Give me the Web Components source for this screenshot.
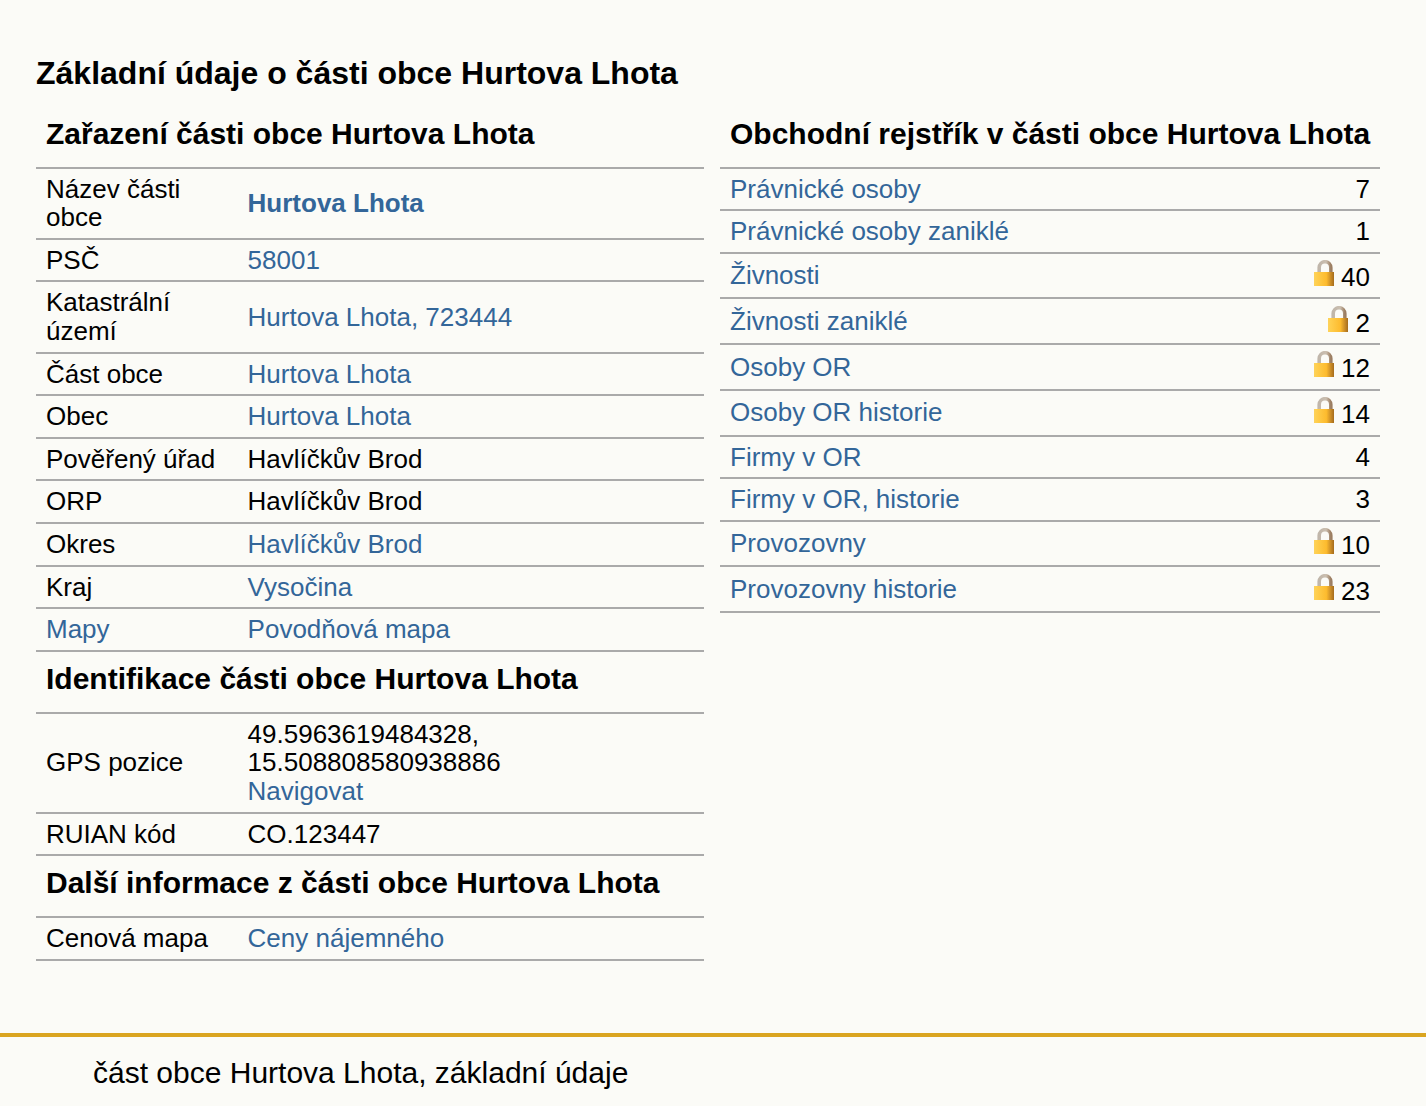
<!DOCTYPE html>
<html lang="cs"><head><meta charset="utf-8"><title>Hurtova Lhota</title>
<style>
html,body{margin:0;padding:0;background:#fbfbf7;color:#000;font-family:"Liberation Sans",Arial,sans-serif;}
</style></head><body>
<x-page>
  <x-columns>
    <x-panel slot="left">
      <x-head>Zařazení části obce Hurtova Lhota</x-head>
      <x-row><span slot="k">Název části obce</span><x-link strong>Hurtova Lhota</x-link></x-row>
      <x-row><span slot="k">PSČ</span><x-link>58001</x-link></x-row>
      <x-row><span slot="k">Katastrální území</span><x-link>Hurtova Lhota, 723444</x-link></x-row>
      <x-row><span slot="k">Část obce</span><x-link>Hurtova Lhota</x-link></x-row>
      <x-row><span slot="k">Obec</span><x-link>Hurtova Lhota</x-link></x-row>
      <x-row><span slot="k">Pověřený úřad</span>Havlíčkův Brod</x-row>
      <x-row><span slot="k">ORP</span>Havlíčkův Brod</x-row>
      <x-row><span slot="k">Okres</span><x-link>Havlíčkův Brod</x-link></x-row>
      <x-row><span slot="k">Kraj</span><x-link>Vysočina</x-link></x-row>
      <x-row><x-link slot="k">Mapy</x-link><x-link>Povodňová mapa</x-link></x-row>
      <x-head>Identifikace části obce Hurtova Lhota</x-head>
      <x-row><span slot="k">GPS pozice</span>49.5963619484328, 15.508808580938886<br><x-link>Navigovat</x-link></x-row>
      <x-row><span slot="k">RUIAN kód</span>CO.123447</x-row>
      <x-head>Další informace z části obce Hurtova Lhota</x-head>
      <x-row><span slot="k">Cenová mapa</span><x-link>Ceny nájemného</x-link></x-row>
    </x-panel>
    <x-panel slot="right">
      <x-head>Obchodní rejstřík v části obce Hurtova Lhota</x-head>
      <x-stat label="Právnické osoby" value="7"></x-stat>
      <x-stat label="Právnické osoby zaniklé" value="1"></x-stat>
      <x-stat label="Živnosti" value="40" locked></x-stat>
      <x-stat label="Živnosti zaniklé" value="2" locked></x-stat>
      <x-stat label="Osoby OR" value="12" locked></x-stat>
      <x-stat label="Osoby OR historie" value="14" locked></x-stat>
      <x-stat label="Firmy v OR" value="4"></x-stat>
      <x-stat label="Firmy v OR, historie" value="3"></x-stat>
      <x-stat label="Provozovny" value="10" locked></x-stat>
      <x-stat label="Provozovny historie" value="23" locked></x-stat>
    </x-panel>
  </x-columns>
</x-page>
<script>
function def(name, css, html, extra){
  customElements.define(name, class extends HTMLElement{
    constructor(){super();this.attachShadow({mode:'open'}).innerHTML='<style>'+css+'</style>'+html;}
    connectedCallback(){ if(extra) extra.call(this); }
  });
}
def('x-page',`:host{height:1106px;overflow:hidden;box-sizing:border-box;padding-top:55px;display:flex;flex-direction:column}
h1{margin:0 0 0 36px;font-size:32px;line-height:37px;font-weight:bold}
main{flex:1;padding:0 46px 0 36px}
footer{border-top:4px solid #daa520;height:69px;padding-left:93px;font-size:30px;line-height:72px}`,
`<h1>Základní údaje o části obce Hurtova Lhota</h1><main><slot></slot></main><footer>část obce Hurtova Lhota, základní údaje</footer>`);
def('x-columns',`:host{display:grid;grid-template-columns:668px 660px;column-gap:16px;margin-top:14.59px;align-items:start}`,
`<slot name="left"></slot><slot name="right"></slot>`);
def('x-panel',`:host{display:block}`,`<slot></slot>`);
def('x-head',`:host{display:block;box-sizing:border-box;height:62px;padding:0 10px;border-bottom:2px solid #aaa;font-size:30px;font-weight:bold;line-height:53px;white-space:nowrap}`,`<slot></slot>`);
def('x-link',`:host{color:#336699}:host([strong]){font-weight:bold}`,`<slot></slot>`);
def('x-row',`:host{display:grid;grid-template-columns:201.6px 1fr;align-items:center;border-bottom:2px solid #aaa;font-size:26px;line-height:28.65px;padding:5.975px 0}
.k,.v{padding:0 10px}`,
`<div class="k"><slot name="k"></slot></div><div class="v"><slot></slot></div>`);
def('x-stat',`:host{display:grid;grid-template-columns:1fr 127px;font-size:26px;line-height:28.65px}
.l,.v{box-sizing:border-box;border-bottom:2px solid #aaa;padding:5.975px 10px}
.l{display:flex;align-items:center}
.v{text-align:right}
:host([locked]) .v{height:45.73px;margin-bottom:-.03px;padding-top:6.1px}
svg{display:inline-block;width:20px;height:26px;vertical-align:baseline}`,
`<div class="l"></div><div class="v"></div>`,
function(){
  const s=this.shadowRoot;
  s.querySelector('.l').innerHTML='<x-link>'+this.getAttribute('label')+'</x-link>';
  const lock=this.hasAttribute('locked')?'<svg viewBox="0 0 20 26"><defs><linearGradient id="g" x1="0" x2="1" y1="0" y2="0"><stop offset="0" stop-color="#fdd25c"/><stop offset=".12" stop-color="#ffcf4f"/><stop offset=".62" stop-color="#fdbb2e"/><stop offset=".85" stop-color="#c88a26"/><stop offset="1" stop-color="#a56c1c"/></linearGradient><linearGradient id="s" x1="0" x2="1" y1="0" y2="0"><stop offset="0" stop-color="#c0b6aa"/><stop offset=".6" stop-color="#cbbfb0"/><stop offset="1" stop-color="#9c7e62"/></linearGradient></defs><path d="M5.2 13V7.5a5.8 5.8 0 0 1 11.6 0V13" fill="none" stroke="url(#s)" stroke-width="3.6"/><rect x="0" y="12" width="20" height="14" fill="url(#g)"/></svg> ':'';
  s.querySelector('.v').innerHTML=lock+'<span>'+this.getAttribute('value')+'</span>';
});
</script>
</body></html>
